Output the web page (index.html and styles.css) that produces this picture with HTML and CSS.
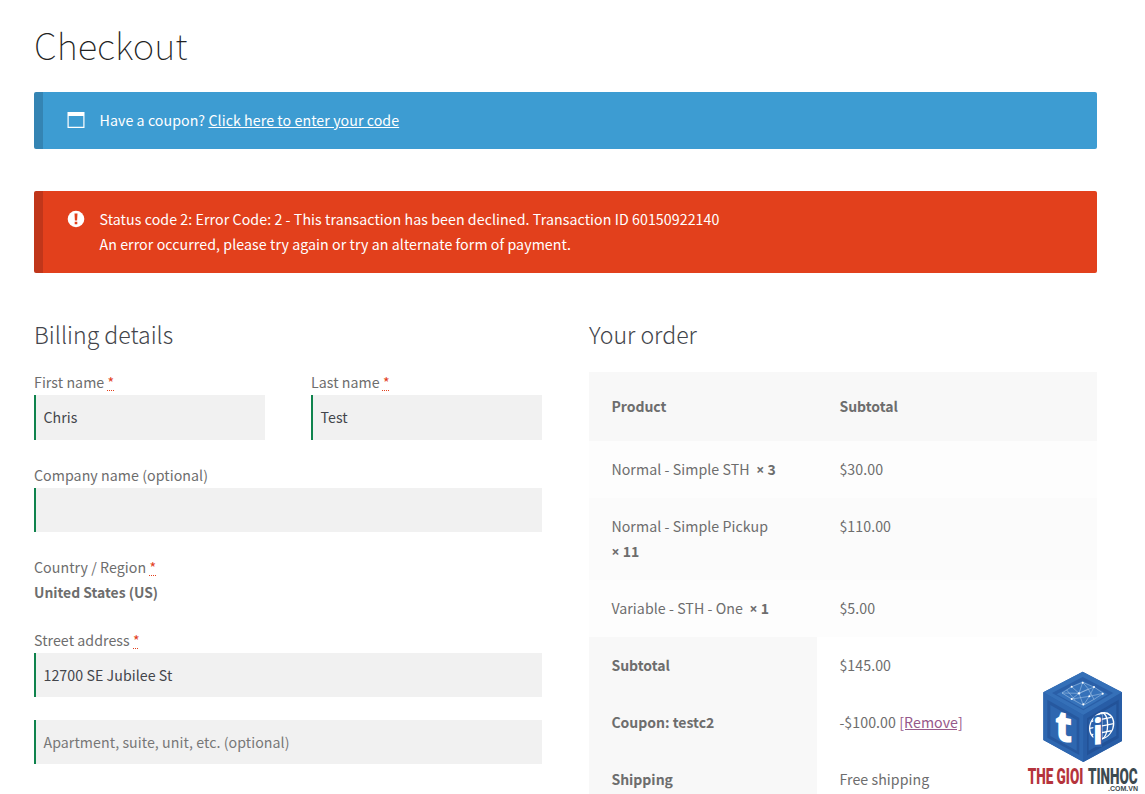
FILE: index.html
```
<!DOCTYPE html>
<html lang="en">
<head>
<meta charset="utf-8">
<title>Checkout</title>
<link rel="stylesheet" href="styles.css">
</head>
<body>
<main class="page">
  <h1 class="page-title">Checkout</h1>

  <div class="notice notice-info">
    <svg class="notice-icon" viewBox="0 0 18 18"><path fill="#fff" fill-rule="evenodd" d="M0.5 1H17.5V17H0.5ZM1.7 5V15.8H16.3V5Z"/></svg>
    <div class="notice-text"><span>Have a coupon?</span> <a class="notice-link" href="#">Click here to enter your code</a></div>
  </div>

  <div class="notice notice-error">
    <svg class="notice-icon" viewBox="0 0 18 18"><circle cx="9" cy="9" r="8.3" fill="#fff"/><path fill="#e2401c" d="M7.5 3.6H10.5L10.1 10.5H7.9ZM7.7 11.8H10.3V14.2H7.7Z"/></svg>
    <div class="notice-text"><span>Status code 2: Error Code: 2 - This transaction has been declined. Transaction ID 60150922140</span><br><span>An error occurred, please try again or try an alternate form of payment.</span></div>
  </div>

  <div class="columns">
    <section class="billing">
      <h3 class="section-title">Billing details</h3>
      <div class="row-pair">
        <div class="field"><label>First name <abbr class="required">*</abbr></label><div class="input">Chris</div></div>
        <div class="field"><label>Last name <abbr class="required">*</abbr></label><div class="input">Test</div></div>
      </div>
      <div class="field"><label>Company name (optional)</label><div class="input"></div></div>
      <div class="field"><label>Country / Region <abbr class="required">*</abbr></label><strong class="country">United States (US)</strong></div>
      <div class="field"><label>Street address <abbr class="required">*</abbr></label><div class="input">12700 SE Jubilee St</div></div>
      <div class="field"><div class="input placeholder">Apartment, suite, unit, etc. (optional)</div></div>
      <div class="field"><label>Town / City <abbr class="required">*</abbr></label><div class="input"></div></div>
    </section>

    <section class="order">
      <h3 class="section-title">Your order</h3>
      <div class="table">
        <div class="tr head"><div class="cell">Product</div><div class="cell">Subtotal</div></div>
        <div class="tr odd"><div class="cell">Normal - Simple STH&nbsp; <strong class="qty"><span class="times">×</span>&nbsp;3</strong></div><div class="cell">$30.00</div></div>
        <div class="tr even"><div class="cell">Normal - Simple Pickup<br><strong class="qty"><span class="times">×</span>&nbsp;11</strong></div><div class="cell">$110.00</div></div>
        <div class="tr odd"><div class="cell">Variable - STH - One&nbsp; <strong class="qty"><span class="times">×</span>&nbsp;1</strong></div><div class="cell">$5.00</div></div>
        <div class="tr total"><div class="cell">Subtotal</div><div class="cell">$145.00</div></div>
        <div class="tr total"><div class="cell">Coupon: testc2</div><div class="cell">-$100.00 <a class="remove" href="#">[Remove]</a></div></div>
        <div class="tr total"><div class="cell">Shipping</div><div class="cell">Free shipping</div></div>
      </div>
    </section>
  </div>

  <svg class="watermark" viewBox="0 0 375 387">
    <path fill="#2b62ab" d="M188 20 306 82V228L190 291 70 225V82Z"/>
    <path fill="#3570b8" d="M188 20 306 82 190 150 70 82Z"/>
    <path fill="#2a5fa8" d="M188 36 280 84 190 136 96 84Z"/>
    <path fill="#3672ba" d="M188 47 264 88 190 132 110 88Z"/>
    <path fill="#2e67b0" d="M70 82 190 150V291L70 225Z"/>
    <path fill="#26589f" d="M82 104 178 159V270L82 218Z"/>
    <path fill="#2e67b0" d="M91 120 170 165V257L91 213Z"/>
    <path fill="#285da6" d="M190 150 306 82V228L190 291Z"/>
    <path fill="#225298" d="M201 160 296 104V219L201 271Z"/>
    <path fill="#2b62ab" d="M206 165 289 117V212L206 257Z"/>
    <g fill="none" stroke="#c4dbf4" stroke-width="1.3">
      <path d="M126 84 155 65 188 52 222 66 250 85 222 103 190 121 155 102ZM155 65 177 85 222 66 208 94 250 85M126 84 177 85 155 102 208 94 190 121 177 85 188 52 205 72 222 103M140 75 166 106M177 85 205 72"/>
    </g>
    <g fill="#fff"><circle cx="155" cy="65" r="3"/><circle cx="188" cy="53" r="3"/><circle cx="222" cy="66" r="3"/><circle cx="177" cy="85" r="3.5"/><circle cx="208" cy="94" r="3"/><circle cx="190" cy="118" r="3"/><circle cx="248" cy="86" r="3"/><circle cx="155" cy="102" r="3"/></g>
    <g fill="none" stroke="#fff" stroke-width="4" transform="matrix(1 -.2 0 1 245 183)">
      <ellipse rx="36" ry="39"/><ellipse rx="18" ry="39"/><path d="M0-39V39M-36 0H36M-29-20H29M-29 20H29"/>
    </g>
    <path fill="#2b62ab" d="M220 153 246 148V230L246 246H220Z"/>
    <text class="mark" transform="matrix(1 .2 0 1 104 224)" font-size="130" textLength="53" lengthAdjust="spacingAndGlyphs">t</text>
    <text class="mark" transform="matrix(1 -.1 0 1 219 240)" font-size="106" textLength="29" lengthAdjust="spacingAndGlyphs">i</text>
    <text class="wordmark" transform="translate(23 357)" fill="#b5343c" font-size="66" textLength="167" lengthAdjust="spacingAndGlyphs">THE GIOI</text>
    <text class="wordmark" transform="translate(204 357)" fill="#3c4a50" font-size="66" textLength="149" lengthAdjust="spacingAndGlyphs">TINHOC</text>
    <text class="domain" x="264" y="379" font-size="19" textLength="90" lengthAdjust="spacingAndGlyphs">.COM.VN</text>
  </svg>
</main>
</body>
</html>
```
FILE: styles.css
```
* { box-sizing: border-box; }
body {
  margin: 0;
  background: #fff;
  color: #6d6d6d;
  font-family: "Noto Sans CJK SC", "Noto Sans", sans-serif;
  font-size: 14.2px;
  letter-spacing: 0.06px;
  line-height: 25px;
}
.page {
  position: relative;
  height: 794px;
  overflow: hidden;
  padding: 0 48px 0 34px;
}
.page-title {
  margin: 0;
  padding-top: 15px;
  height: 92px;
  font-size: 36.6px;
  letter-spacing: 0;
  line-height: 60px;
  font-weight: 100;
  color: #222;
}
.notice {
  display: flex;
  align-items: flex-start;
  border-radius: 2px;
  color: #fff;
  padding: 16px 24px 16px 23.5px;
}
.notice-icon { width: 18px; height: 18px; flex: none; margin: 3px 15px 0 0; }
.notice-text { letter-spacing: 0.075px; }
.notice-info {
  height: 57px;
  background: #3d9cd2;
  border-left: 9px solid #3484b3;
}
.notice-error {
  height: 82px;
  margin-top: 42px;
  background: #e2401c;
  border-left: 9px solid #c0361a;
}
.notice-link { color: #fff; text-decoration: underline; }
.columns {
  display: grid;
  grid-template-columns: 508px 508px;
  gap: 47px;
  padding-top: 41px;
}
.section-title {
  margin: 0;
  height: 56.3px;
  font-size: 23.1px;
  letter-spacing: 0;
  line-height: 40px;
  font-weight: 300;
  color: #43454b;
}
.row-pair {
  display: grid;
  grid-template-columns: 231px 231px;
  gap: 46px;
}
.field { margin-bottom: 22.9px; }
.field label { display: block; }
.required {
  color: #e2401c;
  text-decoration: underline dotted 1px;
  text-underline-offset: 2px;
}
.input {
  height: 44.4px;
  padding: 10px 7.5px;
  background: #f1f1f1;
  border-left: 2px solid #0f834d;
  color: #43454b;
}
.placeholder { color: #777; }
.country { display: block; font-size: 13.9px; letter-spacing: 0; font-weight: 700; }
.order .section-title { height: 58px; }
.tr { display: grid; grid-template-columns: 228px 280px; }
.cell { padding: 16px 22.4px; }
.head { background: #f8f8f8; font-size: 14px; letter-spacing: 0; font-weight: 700; }
.head .cell { padding: 22px 22.4px; }
.odd { background: #fdfdfd; }
.even { background: #fbfbfb; }
.total .cell:first-child { background: #f8f8f8; font-size: 14px; letter-spacing: 0; font-weight: 700; }
.qty { font-size: 14px; line-height: 1; }
.even .cell { height: 82px; }
.times { font-family: "Open Sans", sans-serif; }
.remove { color: #96588a; }
.watermark {
  position: absolute;
  left: 1020px;
  top: 665px;
  width: 125px;
  height: 129px;
  letter-spacing: 0;
}
.mark { font-family: "Open Sans", sans-serif; font-weight: 800; fill: #fff; }
.wordmark { font-family: Roboto, sans-serif; font-weight: 900; }
.domain { font-family: "Liberation Sans", sans-serif; font-weight: 700; fill: #3c4a50; }
```
